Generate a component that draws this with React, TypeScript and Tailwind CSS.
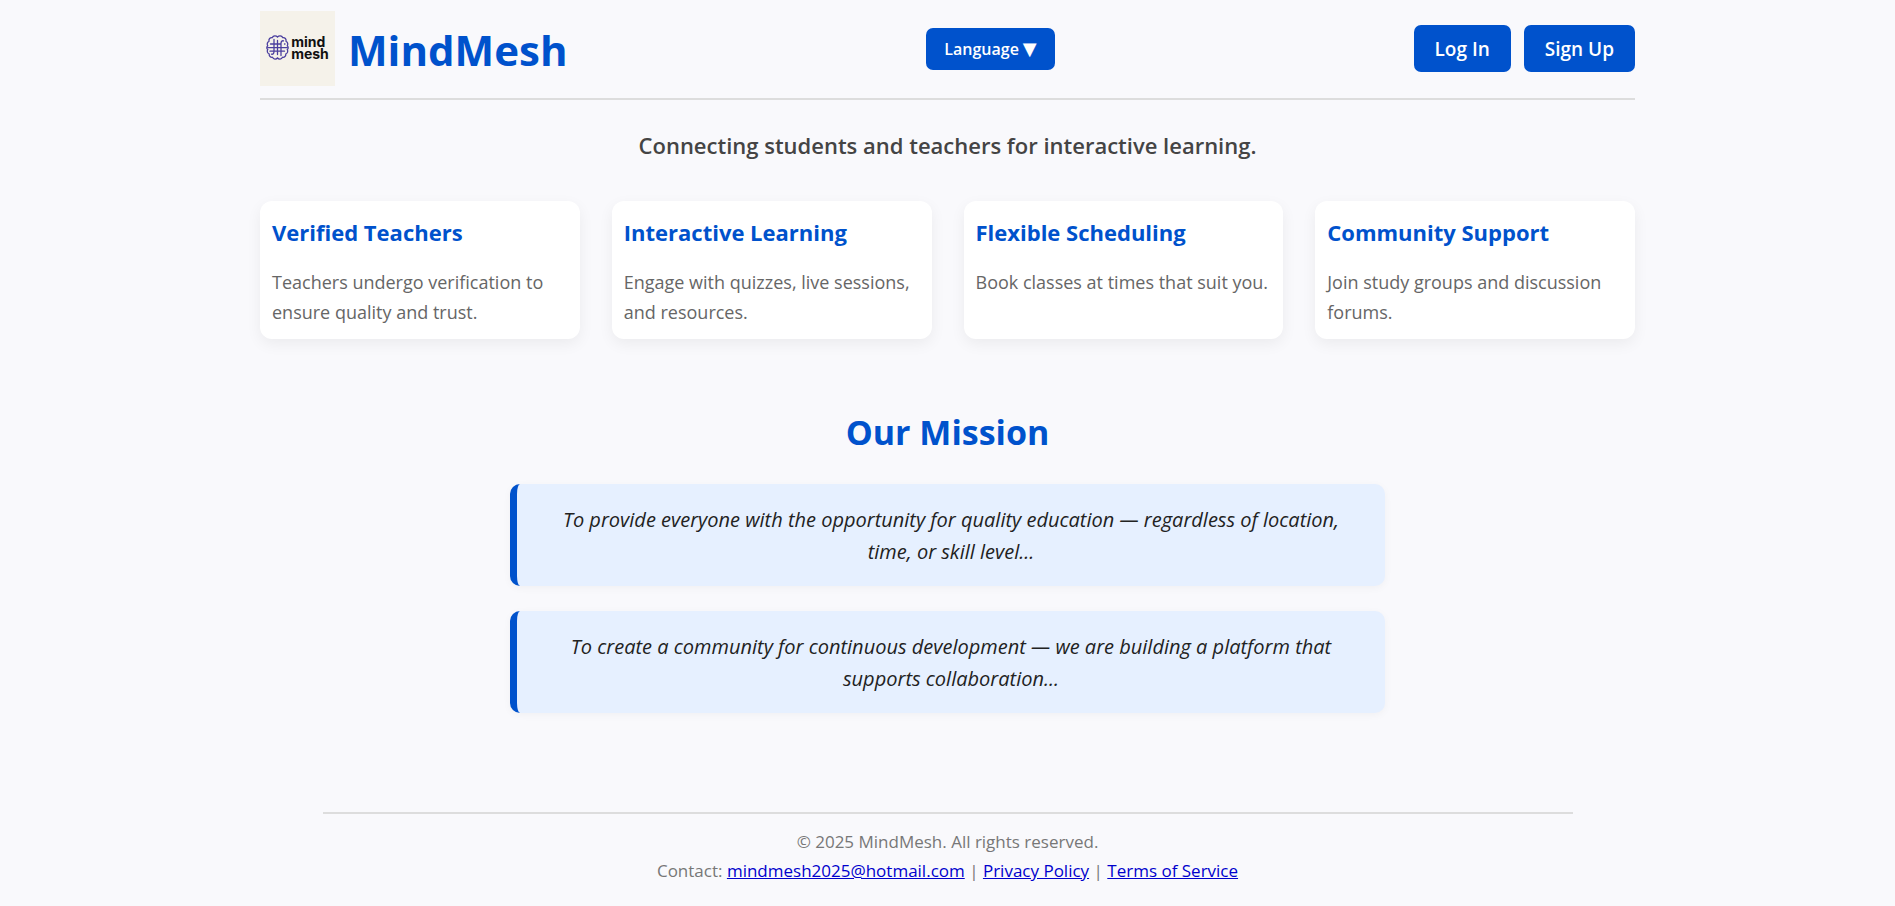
const features = [
  {
    title: "Verified Teachers",
    description: "Teachers undergo verification to ensure quality and trust.",
  },
  {
    title: "Interactive Learning",
    description: "Engage with quizzes, live sessions, and resources.",
  },
  {
    title: "Flexible Scheduling",
    description: "Book classes at times that suit you.",
  },
  {
    title: "Community Support",
    description: "Join study groups and discussion forums.",
  },
];

const missions = [
  "To provide everyone with the opportunity for quality education — regardless of location, time, or skill level...",
  "To create a community for continuous development — we are building a platform that supports collaboration...",
];

function Logo() {
  return (
    <div className="w-[75px] h-[75px] pb-[2px] bg-[#f5f2ea] flex items-center justify-center gap-[2px]">
      <svg className="w-[23px] h-[25px] shrink-0" viewBox="0 0 23 25" fill="none" stroke="#4b3f9e" strokeWidth={1.3} strokeLinecap="round">
        <path d="M11.5 2C10 .4 7.300 .4 6.300 2.600C4 2.300 2.500 4 3 6.200C1.200 7.200 .8 9.200 1.700 10.800C.5 12 .5 13.500 1.700 14.500C.8 16.200 1.400 18.200 3.200 19C3 21.200 4.500 22.600 6.500 22.300C7.500 24.500 10.300 24.500 11.500 23C12.700 24.500 15.500 24.500 16.500 22.300C18.500 22.600 20 21.200 19.800 19C21.600 18.200 22.200 16.200 21.300 14.500C22.500 13.500 22.500 12 21.300 10.800C22.200 9.200 21.800 7.200 20 6.200C20.500 4 19 2.300 16.700 2.600C15.700 .4 13 .4 11.500 2Z" />
        <path d="M11.500 5.500V19.500M8 4.500V16.500C8 18.500 7 19.500 5.500 19.200M15 20.500V8.500C15 6.500 16 5.500 17.500 5.800M4.500 9H15M18.500 9H19M1.700 12.600H21.300M4 16.200H18.500" />
      </svg>
      <div className="font-[Inter,sans-serif] font-bold text-[14px] leading-3 text-[#111111]">
        <div>mind</div>
        <div>mesh</div>
      </div>
    </div>
  );
}

export default function App() {
  return (
    <div className="min-h-screen bg-[#f9f9fc] text-[#222222] font-['Open_Sans','Noto_Sans',sans-serif]">
      <div className="max-w-[1375px] mx-auto">
        {/* Header */}
        <header className="flex items-center justify-between pt-[11px] pb-3 border-b-2 border-[#dddddd]">
          <div className="flex items-center gap-[13px]">
            <Logo />
            <h1 className="pt-[2px] text-[42px] leading-[60px] font-bold text-[#0052cc]">MindMesh</h1>
          </div>
          <button className="h-[42px] px-[18px] rounded-[7px] bg-[#0052cc] text-white text-base font-semibold flex items-center gap-1">
            Language <span className="font-['DejaVu_Sans',sans-serif] text-lg">▼</span>
          </button>
          <div className="flex gap-[13px]">
            <button className="h-[47px] px-[21px] pt-[2px] rounded-[7px] bg-[#0052cc] text-white text-[19px] font-semibold">
              Log In
            </button>
            <button className="h-[47px] px-[21px] pt-[2px] rounded-[7px] bg-[#0052cc] text-white text-[19px] font-semibold">
              Sign Up
            </button>
          </div>
        </header>

        <p className="mt-[25px] text-center text-[22px] leading-10 font-semibold text-[#444444]">
          Connecting students and teachers for interactive learning.
        </p>

        {/* Features */}
        <section className="mt-9 grid grid-cols-1 sm:grid-cols-2 lg:grid-cols-4 gap-8">
          {features.map((item) => (
            <div key={item.title} className="bg-white rounded-xl px-3 pt-[11px] pb-3 shadow-[0_5px_15px_rgba(0,0,0,0.06)]">
              <h3 className="text-[22px] leading-10 font-bold text-[#0052cc]">{item.title}</h3>
              <p className="mt-[15px] text-lg leading-[30px] text-[#666666]">{item.description}</p>
            </div>
          ))}
        </section>
      </div>

      {/* Mission */}
      <section className="max-w-[875px] mx-auto mt-[63px]">
        <h2 className="text-center text-[34px] leading-[60px] font-bold text-[#0052cc]">Our Mission</h2>
        <div className="mt-[22px] flex flex-col gap-[25px]">
          {missions.map((text) => (
            <blockquote
              key={text}
              className="border-l-[7px] border-[#0052cc] rounded-[10px] bg-[#e6f0ff] px-11 pt-5 pb-[18px] text-center text-[20px] leading-8 italic shadow-[0_2px_8px_rgba(0,0,0,0.04)]"
            >
              {text}
            </blockquote>
          ))}
        </div>
      </section>

      {/* Footer */}
      <footer className="max-w-[1250px] mx-auto mt-[99px] pt-[13px] border-t-2 border-[#dddddd] text-center text-[17px] leading-[29px] text-[#777777]">
        <p>© 2025 MindMesh. All rights reserved.</p>
        <p>
          Contact:{" "}
          <a href="mailto:mindmesh2025@hotmail.com" className="text-[#0000cc] underline">
            mindmesh2025@hotmail.com
          </a>{" "}
          |{" "}
          <a href="#privacy" className="text-[#0000cc] underline">
            Privacy Policy
          </a>{" "}
          |{" "}
          <a href="#terms" className="text-[#0000cc] underline">
            Terms of Service
          </a>
        </p>
      </footer>
    </div>
  );
}
